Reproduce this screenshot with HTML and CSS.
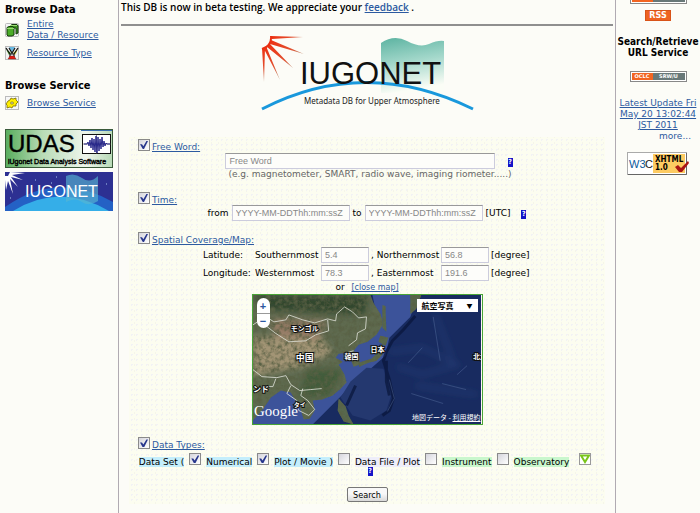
FILE: index.html
```html
<!DOCTYPE html>
<html lang="en">
<head>
<meta charset="utf-8">
<title>IUGONET Metadata Database</title>
<link rel="stylesheet" href="styles.css">
</head>
<body>
<div class="page">
  <nav class="sidebar">
    <h2 class="side-title">Browse Data</h2>
    <ul class="side-list">
      <li><svg class="side-icon" viewBox="0 0 14 14" aria-hidden="true"><rect x=".5" y=".5" width="13" height="13" rx="1" fill="#f4f4f4" stroke="#bbb"/><path d="M5 3 7 1.500H12L13 3V10L11 11V5H5Z" fill="#3f9620" stroke="#163d0c"/><path d="M2 4.500 4 3.500H8L9 5V12L7 13H3L2 12Z" fill="#4bad27" stroke="#173c0d"/><path d="M2 5.500H9M5 2.500H12" stroke="#9bdb75"/></svg><a href="#entire">Entire<br>Data / Resource</a></li>
      <li><svg class="side-icon" viewBox="0 0 14 14" aria-hidden="true"><rect x=".5" y=".5" width="13" height="13" fill="#f2f2f2" stroke="#bbb"/><path d="M4 1H10L7 6Z" fill="#68b9e2"/><path d="M1 3 6 7 4 9Z" fill="#4b9b22"/><path d="M13 3 8 7 10 9Z" fill="#e2d52b"/><path d="M4 2 7 7 10 2M1 2 5 8V11M13 2 9 8V11M5 8H9" fill="none" stroke="#111" stroke-width="1.200"/><path d="M5 10H9L11 13H3Z" fill="#e51b12" stroke="#511" stroke-width=".4"/></svg><a href="#type">Resource Type</a></li>
    </ul>
    <h2 class="side-title side-title-service">Browse Service</h2>
    <ul class="side-list side-list-service">
      <li><svg class="side-icon" viewBox="0 0 14 14" aria-hidden="true"><rect x=".5" y=".5" width="13" height="13" fill="#f7f7f7" stroke="#bbb"/><path d="M3 5 5 4 6 2 8 3 11 2V4L13 6 11 8V10L8 10 7 12 5 11 2 12 2 9 1 8Z" fill="#ffef00" stroke="#766900" stroke-width=".8"/><ellipse cx="7" cy="7" rx="1.500" ry="1" fill="#fff" stroke="#665b00" stroke-width=".7"/></svg><a href="#service">Browse Service</a></li>
    </ul>
    <a class="banner" href="#udas"><svg viewBox="0 0 108 39" role="img" aria-label="UDAS">
      <defs><linearGradient id="udas" x1="0" y1="0" x2="1" y2="0"><stop stop-color="#58ad5d"/><stop offset=".35" stop-color="#b9dcb7"/><stop offset=".75" stop-color="#eef5ec"/><stop offset="1" stop-color="#b7d9b6"/></linearGradient></defs>
      <rect x=".5" y=".5" width="107" height="38" fill="url(#udas)" stroke="#3a5a3a"/><path d="M76 1.500H107" stroke="#3b6fb2"/>
      <text x="3" y="23" class="logo-sans" font-size="24" stroke="#000" stroke-width=".4">UDAS</text>
      <rect x="77.500" y="5.500" width="28" height="19" fill="#fff" stroke="#111"/><path d="M78 15H106M91.500 6V25" stroke="#444" stroke-width=".6"/>
      <path d="M79 15H82L83 13 84 17 85 11 86 19 87 9 88 21 89 10 90 23 91 7 92 24 93 8 94 22 95 10 96 20 97 8 98 18 99 12 100 17 101 14 102 15H105" fill="none" stroke="#26268a"/>
      <text x="3" y="35" class="logo-sans" font-size="7" stroke="#000" stroke-width=".4">iUgonet Data Analysis Software</text>
    </svg></a>
    <a class="banner" href="#iugonet"><svg viewBox="0 0 108 39" role="img" aria-label="IUGONET">
      <rect width="108" height="39" fill="#2d3092"/><path d="M0 35Q52-2 108 30V39H0Z" fill="#2461c5"/><path d="M8 39Q55 10 104 39Z" fill="#35aee8"/>
      <path d="M61 4Q69 0 77 6T93 4V29Q84 35 77 30T61 30Z" fill="#58b5d1" opacity=".65"/>
      <path d="M0 4 3 4 5 0 20 1 7 3 18 8 6 5 13 15 5 7 8 22 3 9 1 18 0 8Z" fill="#fff"/><path d="M30 8H31M51 5H52M101 12H102M46 11H47M5 26H6" stroke="#abcbef"/>
      <text x="20" y="25" class="logo-sans" font-size="16" fill="#fff">IUGONET</text>
    </svg></a>
  </nav>

  <main class="content">
    <p class="notice">This DB is now in beta testing. We appreciate your <a href="#feedback">feedback</a> .</p>
    <hr>
    <svg class="logo" viewBox="0 0 214 80" role="img" aria-label="IUGONET Metadata DB for Upper Atmosphere">
      <defs>
        <linearGradient id="wave" x1="0" y1="0" x2=".2" y2="1"><stop stop-color="#5cb3a1"/><stop offset=".5" stop-color="#a4d8cb"/><stop offset="1" stop-color="#fbfdf6"/></linearGradient>
        <radialGradient id="ray" gradientUnits="userSpaceOnUse" cx="0" cy="0" r="48"><stop offset=".2" stop-color="#ee2f10"/><stop offset=".7" stop-color="#e2502f"/><stop offset="1" stop-color="#b99a80"/></radialGradient>
      </defs>
      <path d="M121 7Q134-2 147 5T169 8 184 5V57H121Z" fill="url(#wave)"/>
      <path d="M11 0 43 1 12 3ZM11 4 44 18 10 8ZM9 7 33 32 7 11ZM6 10 20 44 4 13ZM2 12 5 12 4 46Z" fill="url(#ray)"/><path d="M11 0Q12 10 2 13" fill="none" stroke="#e92f13" stroke-width="2"/>
      <path d="M2 73Q105 20 213 73" fill="none" stroke="#1998dc" stroke-width="3"/>
      <text x="40" y="48" class="logo-sans" font-size="31" fill="#111">IUGONET</text>
      <text x="44" y="68" class="logo-caption" font-size="8" fill="#222">Metadata DB for Upper Atmosphere</text>
    </svg>

    <form class="panel" onsubmit="return false">
      <section class="group-word">
        <div class="group-head"><input type="checkbox" id="word-on" checked aria-label="Use free word"><a href="#word">Free Word:</a></div>
        <div class="word-row">
          <div><input class="field field-word" type="text" placeholder="Free Word" aria-label="Free Word"><p class="hint">(e.g. magnetometer, SMART, radio wave, imaging riometer.....)</p></div>
          <a class="help" href="#help-word">?</a>
        </div>
      </section>
      <section class="group-time">
        <div class="group-head"><input type="checkbox" id="time-on" checked aria-label="Use time"><a href="#time">Time:</a></div>
        <div class="time-row">
          <label for="from">from</label><input class="field field-date" id="from" type="text" placeholder="YYYY-MM-DDThh:mm:ssZ">
          <label for="to">to</label><input class="field field-date" id="to" type="text" placeholder="YYYY-MM-DDThh:mm:ssZ"><span>[UTC]</span><a class="help help-time" href="#help-time">?</a>
        </div>
      </section>
      <section>
        <div class="group-head"><input type="checkbox" id="map-on" checked aria-label="Use spatial coverage"><a href="#map">Spatial Coverage/Map:</a></div>
        <div class="coords">
          <span>Latitude:</span><label for="south">Southernmost</label><input class="field field-degree" id="south" type="text" value="5.4"><label for="north">, Northernmost</label><input class="field field-degree" id="north" type="text" value="56.8"><span>[degree]</span>
          <span>Longitude:</span><label for="west">Westernmost</label><input class="field field-degree" id="west" type="text" value="78.3"><label for="east">, Easternmost</label><input class="field field-degree" id="east" type="text" value="191.6"><span>[degree]</span>
        </div>
        <p class="map-toggle">or <a href="#close">[close map]</a></p>
        <div class="map">
          <svg class="map-art" viewBox="0 0 230 130" aria-hidden="true">
            <defs>
              <filter id="land-grain" x="0" y="0" width="100%" height="100%"><feTurbulence type="fractalNoise" baseFrequency=".22" numOctaves="3" seed="4" result="n"/><feColorMatrix in="n" values="0 0 0 0 .1  0 0 0 0 .12  0 0 0 0 .06  2.400 0 0 0 -.9"/><feComposite in2="SourceGraphic" operator="in" result="g"/><feMerge><feMergeNode in="SourceGraphic"/><feMergeNode in="g"/></feMerge></filter>
              <filter id="soft"><feGaussianBlur stdDeviation="3"/></filter>
              <clipPath id="land"><path d="M0 0H118L121 8 128 19 131 29 124 40 115 47 106 50 101 56 107 61 107 70 101 72 98 64 94 58 86 59 83 63 90 67 86 70 92 80 94 88 88 94 80 101 69 105 60 106 62 116 57 124 51 125 47 112 42 105 38 98 28 96 18 103 9 116 0 126Z"/></clipPath>
            </defs>
            <rect width="230" height="130" fill="#182b60"/>
            <path d="M120 0H166L158 22 137 43 133 61 117 75 99 90 90 100 72 118 60 130H0V107L40 90 80 55 110 48 126 30Z" fill="#3c539a"/>
            <path d="M98 87 114 73 131 74 139 100 134 116 118 126 100 121 88 103Z" fill="#24386f"/>
            <g filter="url(#soft)"><path d="M137 57 170 53 205 70 170 80 145 72M183 20 200 64M164 91 225 100" stroke="#34508b" stroke-width="3" fill="none" opacity=".45"/></g>
            <g filter="url(#land-grain)"><g clip-path="url(#land)"><rect width="130" height="130" fill="#5e6a50"/><g filter="url(#soft)"><path d="M0 42H68L80 58 50 72 0 81Z" fill="#a29474"/><path d="M18 24 74 26 65 45 22 42Z" fill="#967c66"/><path d="M0 0H116L112 20 75 18 10 15Z" fill="#33472f"/><path d="M55 74 91 75 76 102 45 103Z" fill="#435b3b"/></g></g>
              <path d="M158 0H169L164 14 158 19ZM130 10 133 11 134 37 130 33ZM128 41 136 43 133 51 126 47ZM131 47 130 60 124 66 116 68 107 72 106 68 119 64 126 57ZM86 89 90 90 87 96ZM86 104 93 112 96 121 101 130 91 127 85 116ZM63 98 69 100 65 104Z" fill="#59674d"/></g>
            <path d="M163 21 151 35 140 46 134 57 131 66 137 85 141 104 137 116 130 121M134 66 134 87 137 101M103 91 94 111" fill="none" stroke="#0a173c" stroke-width="3" opacity=".75"/>
            <path d="M137 85 142 104 135 117M170 53 156 68M181 22 188 66M215 71 205 80M159 99 191 109M190 89 214 95" fill="none" stroke="#6078a9" opacity=".4"/>
            <path d="M4 25 15 23 21 27 33 25 36 20 50 25 62 28 75 24 83 26 84 19 92 12 100 17 106 23 114 22 113 34 105 38 104 45 96 51M12 30 22 38 36 47 53 46 63 40 76 36 75 25M0 75 9 82 24 83 33 81 38 90 47 96 58 95 69 94M23 84 20 92 12 92M38 91 34 99 44 106 46 116 56 121 62 115 55 106 48 101 50 94M94 58 101 56M0 30 6 26" fill="none" stroke="#e1e3db" stroke-width=".8"/>
            <g class="map-labels"><text x="38" y="36" font-size="7">モンゴル</text><text x="43" y="66" font-size="9">中国</text><text x="92" y="64" font-size="7">韓国</text><text x="118" y="57" font-size="7">日本</text><text x="0" y="97" font-size="8">ンド</text><text x="41" y="113" font-size="6">タイ</text><text x="221" y="64" font-size="7">北太</text></g>
            <text x="1" y="122" class="google" font-size="15">Google</text>
          </svg>
          <div class="zoom"><button type="button" aria-label="Zoom in">+</button><button type="button" aria-label="Zoom out">−</button></div>
          <button type="button" class="map-type"><span>航空写真</span><span>▼</span></button>
          <div class="map-terms">地図データ - <a href="#terms">利用規約</a></div>
        </div>
      </section>
      <section class="group-types">
        <div class="group-head"><input type="checkbox" id="types-on" checked aria-label="Use data types"><a href="#types">Data Types:</a></div>
        <div class="types-row">
          <span class="tag tag-blue">Data Set (</span>
          <input type="checkbox" id="numerical" checked><label class="tag tag-blue" for="numerical">Numerical</label>
          <input type="checkbox" id="movie" checked><label class="tag tag-blue" for="movie">Plot / Movie )</label>
          <input type="checkbox" id="file"><label class="tag tag-lilac" for="file">Data File / Plot</label>
          <input type="checkbox" id="instrument"><label class="tag tag-green" for="instrument">Instrument</label>
          <input type="checkbox" id="observatory"><label class="tag tag-green" for="observatory">Observatory</label>
          <button type="button" class="expand" aria-label="More types"><svg viewBox="0 0 10 10"><path d="M1 1.500H9L5 8Z" fill="#fff" stroke="#79c51b" stroke-width="2"/></svg></button>
        </div>
        <div class="types-help"><a class="help" href="#help-types">?</a></div>
      </section>
      <button type="submit" class="search">Search</button>
    </form>
  </main>

  <aside class="right">
    <div class="badge badge-cut"><span></span><span></span></div>
    <a class="rss" href="#rss">RSS</a>
    <h2 class="right-title">Search/Retrieve URL Service</h2>
    <a class="badge" href="#sru"><span>OCLC</span><span>SRW/U</span></a>
    <a class="update" href="#update">Latest Update Fri May 20 13:02:44 JST 2011</a>
    <a class="more" href="#more">more...</a>
    <a class="w3c" href="#w3c"><svg viewBox="0 0 63 24" role="img" aria-label="W3C XHTML 1.0"><rect x=".5" y=".5" width="59" height="22" fill="#fff" stroke="#aaa"/><rect x="26" y="2" width="32" height="19" fill="#fdcb62"/><path d="M1 22.500H59.500V1" stroke="#666" fill="none"/><text x="2" y="16" class="logo-sans" font-size="11" fill="#0a5a9c">W3</text><text x="18" y="16" class="logo-sans" font-size="11" fill="#222">C</text><text x="28" y="10" class="badge-text" font-size="8">XHTML</text><text x="28" y="18" class="badge-text" font-size="8">1.0</text><path d="M48 15 51 13 54 16 61 9 62 11 55 20 52 20Z" fill="#a91414"/></svg></a>
  </aside>
</div>
</body>
</html>
```
FILE: styles.css
```css
* { box-sizing: border-box; }
body { margin: 0; background: #fcfcf7; color: #000; font: 9px/11px "DejaVu Sans", sans-serif; }
a { color: #2c5aa0; }
p, h2, ul { margin: 0; padding: 0; }
svg { display: block; }
.logo-sans { font-family: "Liberation Sans", sans-serif; }
.logo-caption { font-family: "Noto Sans", sans-serif; }
.page { display: grid; grid-template-columns: 118px minmax(0, 1fr) 84px; min-height: 100vh; }

.sidebar { padding: 4px 5px; }
.side-title { font: bold 11px/12px "DejaVu Sans Condensed", "DejaVu Sans", sans-serif; }
.side-title-service { margin-top: 19px; }
.side-list { list-style: none; display: flex; flex-direction: column; gap: 4px; margin-top: 3px; }
.side-list li { display: flex; align-items: center; gap: 8px; min-height: 16px; }
.side-icon { width: 14px; height: 14px; flex: none; }
.side-list-service { margin-bottom: 18px; }
.banner { display: block; margin-bottom: 4px; }

.content { border: solid #b0aab2; border-width: 0 1px; padding: 2px 2px 0; }
.notice { font: 600 10px/11px "Open Sans", sans-serif; }
hr { height: 2px; margin: 11px 0 10px; border: 0; background: #8f8f8f; }
.logo { width: 214px; height: 80px; margin: 0 auto 21px; }

.panel { margin: 0 8px; padding: 2px 8px; background: radial-gradient(#f2f2f5 1px, transparent 1px) 0 0 / 5px 5px, radial-gradient(#f5f5ea 1px, transparent 1px) 2px 3px / 7px 6px #fcfdf0; }
.group-head { display: flex; align-items: flex-end; gap: 2px; height: 14px; margin-left: 1px; }
input[type="checkbox"] { appearance: none; width: 12px; height: 12px; margin: 0; flex: none; align-self: flex-start; background: linear-gradient(135deg, #d5d5dc, #fff); border: 1px solid #8a8a8a; }
input[type="checkbox"]:checked::after { content: ""; display: block; width: 8px; height: 8px; margin: 1px; background: #27368c; clip-path: polygon(0 40%, 25% 40%, 42% 65%, 80% 0, 100% 0, 50% 100%, 35% 100%); }
.field { height: 16px; margin: 0; padding: 0 3px; border: 1px solid #ccd; border-top-color: #999; background: #fdfdfa; color: #888; font: 9px/12px "Liberation Sans", sans-serif; }
.field::placeholder { color: #888; opacity: 1; }
.field-word { display: block; width: 270px; }
.field-date { width: 118px; }
.field-degree { width: 48px; }
.help { display: inline-block; width: 5px; height: 9px; background: #1414c8; color: #fff; font: bold 7px/9px "DejaVu Sans Condensed", sans-serif; text-align: center; text-decoration: none; }
.group-word { height: 53px; }
.word-row { display: flex; justify-content: center; margin-left: 4px; }
.word-row .help { margin: 5px 0 0 -4px; }
.hint { color: #666; padding-left: 3px; }
.group-time { height: 40px; }
.time-row { display: flex; justify-content: center; align-items: center; gap: 3px; margin-top: -1px; }
.help-time { margin: 3px 0 0 8px; }
.coords { display: grid; grid-template-columns: 52px 66px 50px 70px 50px 40px; row-gap: 2px; justify-content: center; align-items: center; margin-top: 1px; }
.map-toggle { text-align: center; line-height: 12px; }
.map-toggle a { margin-left: 4px; font-size: 8px; }
.map { position: relative; width: 231px; margin: 0 auto; border: 1px solid #49a536; overflow: hidden; }
.map-labels { font-family: "Noto Sans CJK JP", sans-serif; font-weight: bold; fill: #fff; stroke: #111; stroke-width: 2px; paint-order: stroke; }
.google { font-family: "Liberation Serif", serif; fill: #fff; }
.zoom { position: absolute; left: 4px; top: 3px; width: 13px; }
.zoom button { display: block; width: 13px; height: 15px; padding: 0; border: 0; background: #fff; color: #2b57a0; font: bold 11px/14px "Liberation Sans", sans-serif; border-radius: 7px 7px 0 0; }
.zoom button + button { border-top: 1px solid #999; border-radius: 0 0 7px 7px; }
.map-type { position: absolute; right: 4px; top: 4px; width: 61px; height: 13px; display: flex; justify-content: space-between; align-items: center; padding: 0 5px; border: 0; background: #fff; color: #000; font: bold 8px/12px "Noto Sans CJK JP", sans-serif; white-space: nowrap; }
.map-type span + span { font-size: 6px; }
.map-terms { position: absolute; right: 1px; bottom: 1px; color: #fff; font: 7px/11px "Noto Sans CJK JP", sans-serif; white-space: nowrap; }
.map-terms a { color: #fff; }
.group-types { margin-top: 12px; }
.types-row { display: flex; justify-content: center; align-items: flex-end; gap: 5px; height: 14px; margin: 2px -6px 0 -10px; white-space: nowrap; }
.tag { line-height: 10px; }
.tag-blue { background: #c4eefc; }
.tag-lilac { background: #eeeefa; }
.tag-green { background: #c9f7cd; }
.expand { width: 12px; height: 12px; padding: 0; margin-left: 5px; border: 1px solid #999; background: #fff; align-self: flex-start; }
.types-help { display: flex; justify-content: center; padding-left: 6px; }
.search { display: block; width: 41px; height: 15px; margin: 11px auto 0; padding: 0; border: 1px solid #777; border-radius: 2px; background: linear-gradient(#f8f8f8 45%, #d8d8d8); color: #000; font: 9px/12px "DejaVu Sans Condensed", sans-serif; }

.right { display: flex; flex-direction: column; align-items: center; text-align: center; }
.badge { display: flex; width: 57px; height: 11px; padding: 1px; border: 1px solid #888; background: #fff; color: #fff; font: bold 5px/7px "DejaVu Sans", sans-serif; text-decoration: none; }
.badge span { flex: 21; background: #f26522; }
.badge span + span { flex: 32; background: #687878; }
.badge-cut { height: 4px; border-top: 0; padding-top: 0; }
.rss { width: 26px; height: 11px; margin-top: 6px; background: #ee6322; border: 1px solid #d85319; color: #fff; font: bold 8px/9px "DejaVu Sans", sans-serif; text-decoration: none; }
.right-title { font: bold 10px/11px "DejaVu Sans Condensed", "DejaVu Sans", sans-serif; margin: 15px 0 13px; }
.update { margin-top: 16px; }
.more { align-self: flex-end; margin-right: 9px; text-decoration: none; }
.w3c { width: 63px; margin-top: 10px; }
.badge-text { font-family: "DejaVu Sans Condensed", sans-serif; font-weight: bold; }
```
